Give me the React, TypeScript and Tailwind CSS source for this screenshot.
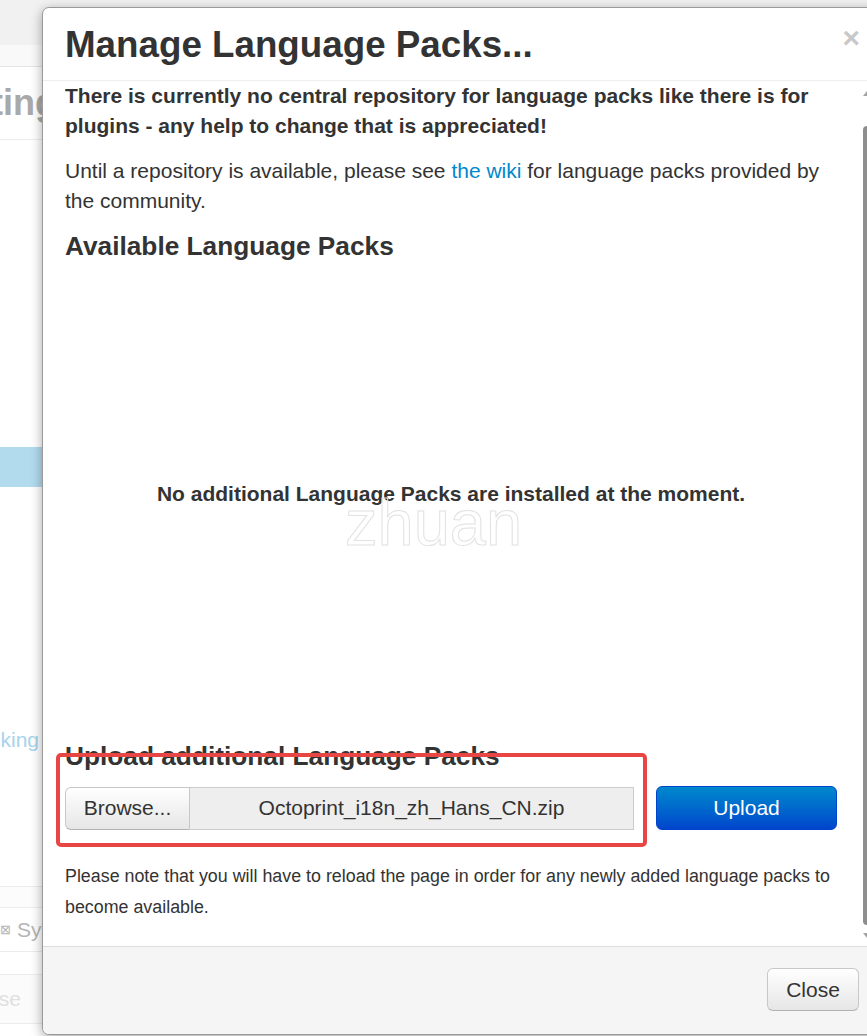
import React from "react";

function BackgroundPage() {
  return (
    <div className="flex h-full w-full flex-col overflow-hidden bg-white">
      <div className="h-[45px] shrink-0 bg-[#f1f1f1]" />
      <div className="h-[22px] shrink-0 border-b border-[#e4e4e4] bg-[#f9f9f9]" />
      <div className="flex h-[73px] shrink-0 items-center border-b border-[#ededed]">
        <div className="flex w-[57px] justify-end">
          <span className="whitespace-nowrap text-[36px] font-bold text-[#a9a9a9]">Setting</span>
        </div>
      </div>
      <div className="h-[307px] shrink-0" />
      <div className="h-[40px] shrink-0 bg-[#b2dbee]" />
      <div className="h-[238px] shrink-0" />
      <div className="flex h-[30px] shrink-0 items-center">
        <div className="flex w-[39px] justify-end">
          <span className="whitespace-nowrap text-[21px] text-[#a7d4eb]">Tracking</span>
        </div>
      </div>
      <div className="h-[131px] shrink-0" />
      <div className="h-[21px] shrink-0 border-t border-[#ececec] bg-[#fcfcfc]" />
      <div className="flex h-[44px] shrink-0 items-center gap-[6px] border-t border-[#ececec] text-[#b5b5b5]">
        <span className="text-[13px] leading-none">⊠</span>
        <span className="whitespace-nowrap text-[21px]">System</span>
      </div>
      <div className="h-[23px] shrink-0 border-t border-[#ececec]" />
      <div className="flex h-[50px] shrink-0 items-center border-y border-[#ececec] bg-[#fbfbfb]">
        <div className="flex w-[21px] justify-end">
          <span className="whitespace-nowrap text-[21px] text-[#e0e0e0]">Close</span>
        </div>
      </div>
    </div>
  );
}

function Scrollbar() {
  return (
    <div className="flex w-[22px] shrink-0 flex-col items-start pl-[4px] pt-[10px] pb-[8px]">
      <div className="h-0 w-0 border-x-[4px] border-b-[5px] border-x-transparent border-b-[#a3a3a3]" />
      <div className="mt-[30px] w-[8px] flex-1 rounded-[4px] bg-[#8e8e8e]" />
      <div className="mt-[8px] h-0 w-0 border-x-[4px] border-t-[5px] border-x-transparent border-t-[#a3a3a3]" />
    </div>
  );
}

export default function App() {
  return (
    <div className="relative h-[1036px] w-[867px] overflow-hidden bg-white font-['Liberation_Sans',Arial,sans-serif] text-[#333]">
      <BackgroundPage />

      <div className="absolute left-[42px] top-[7px] flex h-[1028px] w-[840px] flex-col overflow-hidden rounded-[7px] border border-[#9a9a9a] bg-white shadow-[0_3px_12px_rgba(0,0,0,0.35)]">
        <div className="flex h-[73px] shrink-0 items-center justify-between border-b border-[#eeeeee] pl-[22px] pr-[21px]">
          <h3 className="text-[36.75px] font-bold leading-[45px] text-[#333]">Manage Language Packs...</h3>
          <span className="-mt-[12px] text-[30px] font-bold leading-none text-[#c8c8c8]">×</span>
        </div>

        <div className="flex min-h-0 flex-1">
          <div className="relative flex-1 pl-[22px] pr-[22px] text-[21px] leading-[30px]">
            <p className="font-bold">
              There is currently no central repository for language packs like there is for plugins - any help to change that is appreciated!
            </p>
            <p className="mt-[15px]">
              Until a repository is available, please see <span className="text-[#0088cc]">the wiki</span> for language packs provided by the community.
            </p>
            <h4 className="mt-[15px] text-[26.25px] font-bold leading-[30px]">Available Language Packs</h4>
            <div className="flex h-[466px] items-center justify-center">
              <span className="font-bold">No additional Language Packs are installed at the moment.</span>
            </div>
            <h4 className="mt-[14px] text-[26.25px] font-bold leading-[30px]">Upload additional Language Packs</h4>
            <div className="mt-[15px] flex items-center">
              <div className="flex h-[43px] w-[569px] text-[21px]">
                <div className="flex w-[125px] items-center justify-center rounded-l-[6px] border border-[#c8c8c8] border-b-[#b3b3b3] bg-gradient-to-b from-white to-[#e6e6e6] text-[#333]">
                  Browse...
                </div>
                <div className="flex flex-1 items-center justify-center border border-l-0 border-[#cccccc] bg-[#eeeeee] text-[#333]">
                  Octoprint_i18n_zh_Hans_CN.zip
                </div>
              </div>
              <div className="ml-[22px] flex h-[44px] w-[181px] items-center justify-center rounded-[6px] border border-[#0044cc] bg-gradient-to-b from-[#0088cc] to-[#0044cc] text-white">
                Upload
              </div>
            </div>
            <p className="mt-[31px] text-[17.85px] leading-[31px]">
              Please note that you will have to reload the page in order for any newly added language packs to become available.
            </p>

            <div className="pointer-events-none absolute left-[302px] top-[409px] select-none text-[65px] leading-none text-transparent [-webkit-text-stroke:1px_#e2e2e2]">
              zhuan
            </div>
            <div className="pointer-events-none absolute left-[13px] top-[672px] h-[94px] w-[591px] rounded-[5px] border-[4px] border-[#e84545]" />
          </div>
          <Scrollbar />
        </div>

        <div className="flex h-[88px] shrink-0 items-start justify-end border-t border-[#dddddd] bg-[#f5f5f5] pr-[22px] pt-[21px]">
          <div className="flex h-[43px] w-[92px] items-center justify-center rounded-[6px] border border-[#c8c8c8] border-b-[#b3b3b3] bg-gradient-to-b from-white to-[#e6e6e6] text-[21px] text-[#333]">
            Close
          </div>
        </div>
      </div>
    </div>
  );
}
